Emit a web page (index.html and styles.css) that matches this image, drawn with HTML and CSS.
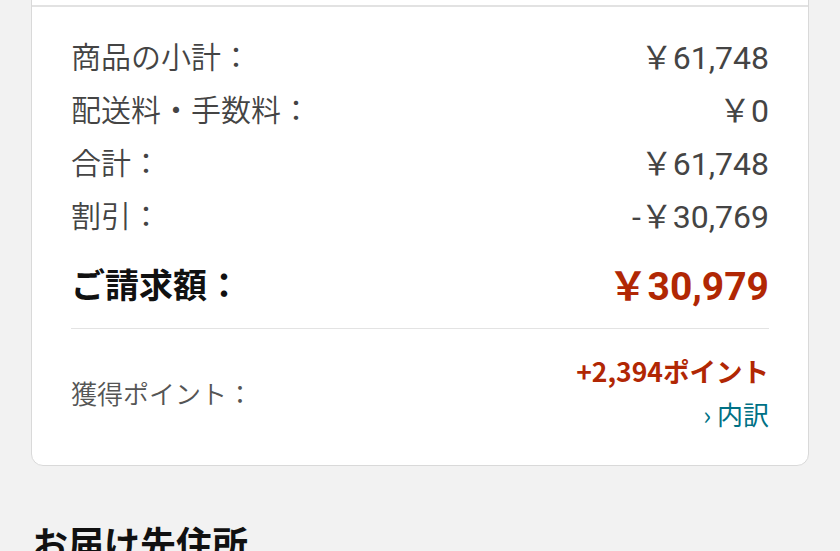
FILE: index.html
```html
<!DOCTYPE html>
<html lang="ja">
<head>
  <meta charset="utf-8">
  <meta name="viewport" content="width=device-width, initial-scale=1">
  <title>注文内容の確認</title>
  <link rel="stylesheet" href="styles.css">
</head>
<body>
  <div class="card">
    <div class="card-top"></div>

    <div class="summary">
      <div class="row">
        <span class="label">商品の小計：</span>
        <span class="amount">￥61,748</span>
      </div>
      <div class="row">
        <span class="label">配送料・手数料：</span>
        <span class="amount">￥0</span>
      </div>
      <div class="row">
        <span class="label">合計：</span>
        <span class="amount">￥61,748</span>
      </div>
      <div class="row">
        <span class="label">割引：</span>
        <span class="amount">-￥30,769</span>
      </div>

      <div class="row total">
        <span class="label">ご請求額：</span>
        <span class="amount">￥30,979</span>
      </div>

      <div class="points">
        <span class="points-label">獲得ポイント：</span>
        <div class="points-right">
          <span class="points-value">+2,394ポイント</span>
          <a class="breakdown" href="#">› 内訳</a>
        </div>
      </div>
    </div>
  </div>

  <h2 class="section-title">お届け先住所</h2>
</body>
</html>
```

FILE: styles.css
```css
body {
  margin: 0;
  background-color: #f2f2f2;
  font-family: Roboto, "Noto Sans CJK JP", sans-serif;
  color: #444;
}

.card {
  margin: -10px 31px 0;
  background-color: #fff;
  border: 1px solid #d9d9d9;
  border-radius: 0 0 12px 12px;
}

.card-top {
  height: 14px;
  border-bottom: 2px solid #e2e2e2;
}

.summary {
  padding: 21px 39px 30px;
}

.row {
  display: flex;
  justify-content: space-between;
  align-items: center;
  height: 53px;
}

.label {
  font-family: "Noto Sans CJK JP", sans-serif;
  font-size: 30px;
  font-weight: 350;
}

.amount {
  font-size: 32px;
}

.row.total {
  height: 60px;
  margin-top: 13px;
  padding-bottom: 15px;
  border-bottom: 1px solid #e3e3e3;
  color: #111;
}

.total .label {
  font-size: 34px;
  font-weight: bold;
}

.total .amount {
  font-size: 39px;
  font-weight: bold;
  color: #b12704;
}

.points {
  display: flex;
  justify-content: space-between;
  align-items: center;
  padding-top: 20px;
}

.points-label {
  font-family: "Noto Sans CJK JP", sans-serif;
  font-size: 26px;
  font-weight: 350;
  color: #555;
}

.points-right {
  display: flex;
  flex-direction: column;
  align-items: flex-end;
}

.points-value {
  font-family: "Noto Sans CJK JP", sans-serif;
  font-size: 26.5px;
  font-weight: bold;
  color: #b12704;
  line-height: 43px;
}

.breakdown {
  font-family: "Noto Sans CJK JP", sans-serif;
  font-size: 26px;
  color: #007185;
  text-decoration: none;
  line-height: 43px;
}

.section-title {
  margin: 50px 32px 0;
  font-family: "Noto Sans CJK JP", sans-serif;
  font-size: 36px;
  font-weight: bold;
  color: #111;
}
```
